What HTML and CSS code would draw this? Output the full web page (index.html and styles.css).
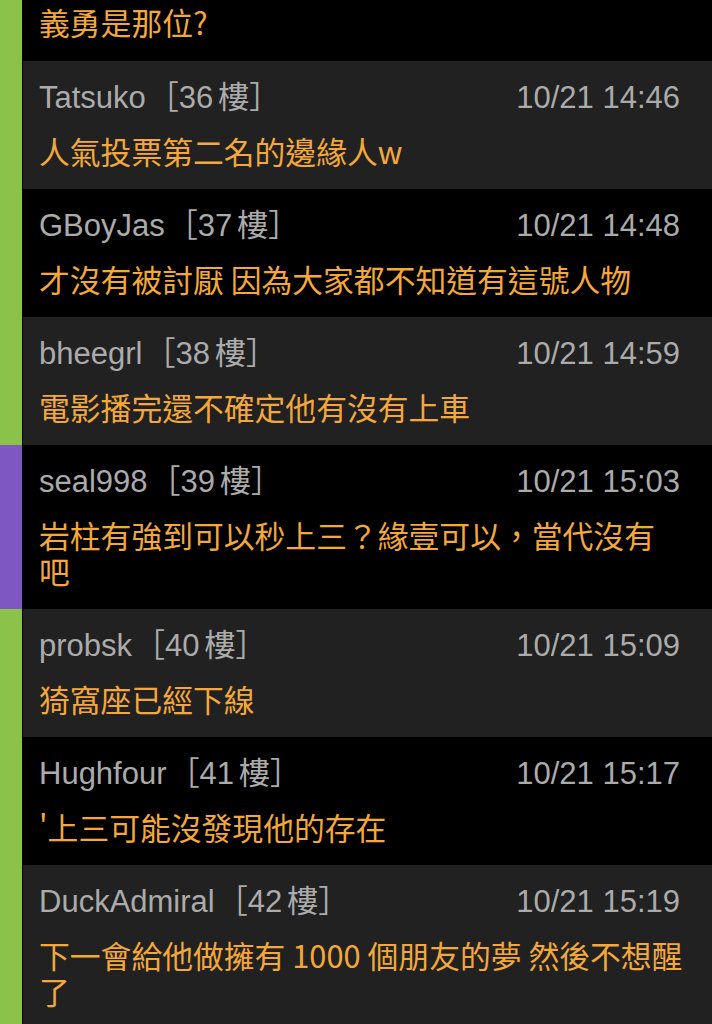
FILE: index.html
```html
<!DOCTYPE html>
<html lang="zh-Hant">
<head>
<meta charset="utf-8">
<title>留言</title>
<link rel="stylesheet" href="styles.css">
</head>
<body>
<div class="list">
  <div class="post dark">
    <div class="bar green"></div>
    <div class="body partial">
      <div class="text">義勇是那位?</div>
    </div>
  </div>
  <div class="post gray">
    <div class="bar green"></div>
    <div class="body">
      <div class="head"><span class="name">Tatsuko<span class="floor">［36<span class="lou">樓</span>］</span></span><span class="time">10/21 14:46</span></div>
      <div class="text">人氣投票第二名的邊緣人w</div>
    </div>
  </div>
  <div class="post dark">
    <div class="bar green"></div>
    <div class="body">
      <div class="head"><span class="name">GBoyJas<span class="floor">［37<span class="lou">樓</span>］</span></span><span class="time">10/21 14:48</span></div>
      <div class="text">才沒有被討厭 因為大家都不知道有這號人物</div>
    </div>
  </div>
  <div class="post gray">
    <div class="bar green"></div>
    <div class="body">
      <div class="head"><span class="name">bheegrl<span class="floor">［38<span class="lou">樓</span>］</span></span><span class="time">10/21 14:59</span></div>
      <div class="text">電影播完還不確定他有沒有上車</div>
    </div>
  </div>
  <div class="post dark">
    <div class="bar purple"></div>
    <div class="body">
      <div class="head"><span class="name">seal998<span class="floor">［39<span class="lou">樓</span>］</span></span><span class="time">10/21 15:03</span></div>
      <div class="text">岩柱有強到可以秒上三？緣壹可以，當代沒有吧</div>
    </div>
  </div>
  <div class="post gray">
    <div class="bar green"></div>
    <div class="body">
      <div class="head"><span class="name">probsk<span class="floor">［40<span class="lou">樓</span>］</span></span><span class="time">10/21 15:09</span></div>
      <div class="text">猗窩座已經下線</div>
    </div>
  </div>
  <div class="post dark">
    <div class="bar green"></div>
    <div class="body">
      <div class="head"><span class="name">Hughfour<span class="floor">［41<span class="lou">樓</span>］</span></span><span class="time">10/21 15:17</span></div>
      <div class="text">'上三可能沒發現他的存在</div>
    </div>
  </div>
  <div class="post gray">
    <div class="bar green"></div>
    <div class="body">
      <div class="head"><span class="name">DuckAdmiral<span class="floor">［42<span class="lou">樓</span>］</span></span><span class="time">10/21 15:19</span></div>
      <div class="text">下一會給他做擁有 1000 個朋友的夢 然後不想醒了</div>
    </div>
  </div>
</div>
</body>
</html>
```
FILE: styles.css
```css
html, body {
  margin: 0;
  padding: 0;
  background: #000;
}
body {
  width: 712px;
  overflow: hidden;
}
.list {
  display: flex;
  flex-direction: column;
}
.post {
  display: flex;
  gap: 1px;
  background: #000;
}
.bar {
  width: 22px;
  flex: none;
}
.bar.green { background: #8bc34a; }
.bar.purple { background: #7e57c2; }
.body {
  flex: 1;
  min-width: 0;
  padding: 16px 28px 20px 16px;
}
.post.gray .body { background: #212121; }
.post.dark .body { background: #000; }
.body.partial {
  padding-top: 4px;
  padding-bottom: 21px;
}
.head {
  display: flex;
  justify-content: space-between;
  align-items: center;
  height: 40px;
  padding-top: 1px;
  margin-bottom: 15px;
  margin-right: 4px;
  font-family: "Liberation Sans", "Noto Sans CJK TC", sans-serif;
  font-size: 31px;
  line-height: 40px;
  color: #ababab;
  white-space: nowrap;
}
.floor {
  margin-left: 2px;
}
.lou {
  margin-left: 5px;
}
.text {
  font-family: "Noto Sans CJK TC", "Liberation Sans", sans-serif;
  font-size: 30.8px;
  line-height: 36px;
  color: #f4a83a;
}
```
